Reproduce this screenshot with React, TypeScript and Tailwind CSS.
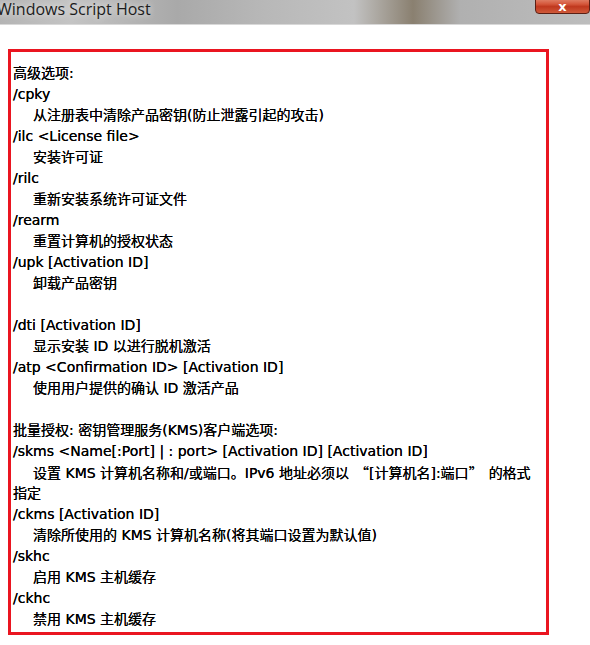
import React from 'react';

// Each row of the dialog text; indent = command description
const lines: { text: React.ReactNode; indent?: boolean }[] = [
  { text: '高级选项:' },
  { text: '/cpky' },
  { text: '从注册表中清除产品密钥(防止泄露引起的攻击)', indent: true },
  { text: '/ilc <License file>' },
  { text: '安装许可证', indent: true },
  { text: '/rilc' },
  { text: '重新安装系统许可证文件', indent: true },
  { text: '/rearm' },
  { text: '重置计算机的授权状态', indent: true },
  { text: '/upk [Activation ID]' },
  { text: '卸载产品密钥', indent: true },
  { text: '' },
  { text: '/dti [Activation ID]' },
  { text: '显示安装 ID 以进行脱机激活', indent: true },
  { text: '/atp <Confirmation ID> [Activation ID]' },
  { text: '使用用户提供的确认 ID 激活产品', indent: true },
  { text: '' },
  { text: '批量授权: 密钥管理服务(KMS)客户端选项:' },
  { text: '/skms <Name[:Port] | : port> [Activation ID] [Activation ID]' },
  {
    text: (
      <>
        {'设置 KMS 计算机名称和/或端口。IPv6 地址必须以'}
        <span className="pl-[6px] font-['Noto_Sans_CJK_SC',sans-serif]">“</span>
        {'[计算机名]:端口'}
        <span className="pr-[6px] font-['Noto_Sans_CJK_SC',sans-serif]">”</span>
        {'的格式'}
      </>
    ),
    indent: true,
  },
  { text: '指定' },
  { text: '/ckms [Activation ID]' },
  { text: '清除所使用的 KMS 计算机名称(将其端口设置为默认值)', indent: true },
  { text: '/skhc' },
  { text: '启用 KMS 主机缓存', indent: true },
  { text: '/ckhc' },
  { text: '禁用 KMS 主机缓存', indent: true },
];

export default function App() {
  return (
    <div className="w-[590px] h-[645px] bg-white overflow-hidden">
      {/* Aero title bar */}
      <div className="relative h-[25px] border-b border-[#d8d8d8] bg-[linear-gradient(90deg,#b4b4b4_0%,#c4c4c4_12%,#a9a9a9_30%,#b8b8b8_45%,#c2c2c2_60%,#8a8070_70%,#b0b0b0_78%,#bdbdbd_100%)]">
        <span className="absolute left-[-3px] top-[-3px] text-[16px] leading-[24px] text-[#1c1c1c] font-['Open_Sans',sans-serif] [text-shadow:0_0_6px_rgba(255,255,255,0.9)]">
          Windows Script Host
        </span>
        <div className="absolute right-0 top-[-4px] w-[55px] h-[18px] rounded-b-[4px] border border-[#5a1f14] bg-[linear-gradient(180deg,#e6957e_0%,#d4563a_45%,#c0381e_60%,#cf5a3a_100%)] flex items-end justify-center">
          <span className="text-white text-[13px] font-bold leading-[13px] font-['DejaVu_Sans',sans-serif]">x</span>
        </div>
      </div>

      {/* highlighted content */}
      <div className="ml-[8px] mt-[24px] w-[541px] h-[586px] border-[3px] border-[#ea1520] pt-[11px] pl-[2px]">
        {lines.map((l, i) => (
          <div
            key={i}
            className={`h-[21px] leading-[21px] text-[14px] text-black whitespace-nowrap [text-shadow:0_0_0.6px_#000] font-['DejaVu_Sans','Noto_Sans_CJK_SC',sans-serif] ${l.indent ? 'pl-[20px]' : ''}`}
          >
            {l.text}
          </div>
        ))}
      </div>
    </div>
  );
}
